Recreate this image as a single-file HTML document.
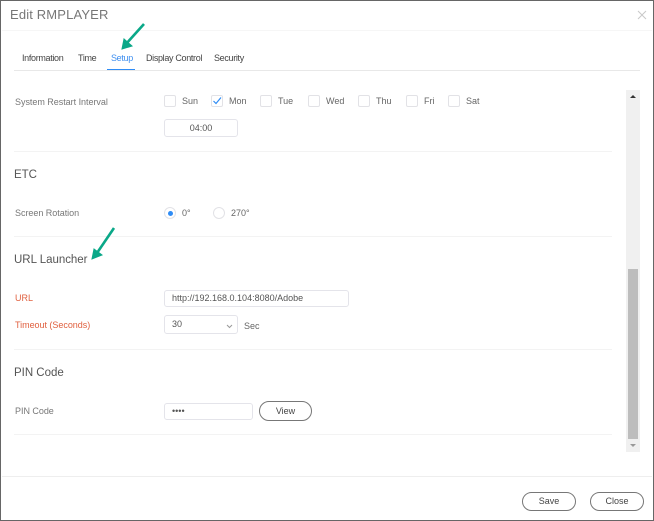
<!DOCTYPE html>
<html><head><meta charset="utf-8">
<style>
html,body{margin:0;padding:0;background:#fff}
#p{position:relative;width:654px;height:521px;overflow:hidden;background:#fff;font-family:"Liberation Sans",sans-serif;color:#555}
#b{position:absolute;left:0;top:0;width:654px;height:521px;filter:blur(.3px)}
#p div{position:absolute;box-sizing:border-box;white-space:nowrap}
.t{font-size:9px;line-height:12px;letter-spacing:-.33px;color:#444}
.l{font-size:9px;line-height:12px;color:#777;letter-spacing:-.03px}
.h{font-size:11.5px;line-height:14px;color:#555;letter-spacing:-.02px}
.d{font-size:9px;line-height:12px;color:#666;letter-spacing:0}
.c{width:12px;height:12px;border:1px solid #e2e2e6;border-radius:2px;background:#fff}
.r{width:12px;height:12px;border:1px solid #e2e2e6;border-radius:50%;background:#fff}
.hr{left:14px;width:598px;height:1px;background:#f3f3f3}
.i{border:1px solid #e4e4ea;border-radius:3px;background:#fff;font-size:9px;color:#555}
.b{border:1px solid #777;border-radius:10px;background:#fff;font-size:9px;color:#444;text-align:center}
</style></head><body>
<div id="p"><div id="b">
<div style="left:0;top:0;width:654px;height:521px;border:1px solid #666"></div>
<div style="left:10px;top:7px;font-size:13px;line-height:16px;color:#777;letter-spacing:.15px">Edit RMPLAYER</div>
<svg style="position:absolute;left:637px;top:10px" width="10" height="10" viewBox="0 0 10 10"><path d="M1 1L9 9M9 1L1 9" stroke="#c8c8c8" stroke-width="1" fill="none"/></svg>
<div style="left:2px;top:30px;width:650px;height:1px;background:#f6f6f6"></div>

<div class="t" style="left:22px;top:52px">Information</div>
<div class="t" style="left:78px;top:52px">Time</div>
<div class="t" style="left:111px;top:52px;color:#3f8ff0">Setup</div>
<div class="t" style="left:146px;top:52px">Display Control</div>
<div class="t" style="left:214px;top:52px">Security</div>
<div style="left:14px;top:70px;width:626px;height:1px;background:#e8e8e8"></div>
<div style="left:107px;top:68.5px;width:28px;height:1.5px;background:#2f8cf5"></div>

<div class="l" style="left:15px;top:96px">System Restart Interval</div>
<div class="c" style="left:164px;top:95px"></div><div class="d" style="left:182px;top:95px">Sun</div>
<div class="c" style="left:211px;top:95px"></div>
<svg style="position:absolute;left:211px;top:95px" width="12" height="12" viewBox="0 0 12 12"><path d="M2.5 6L5 8.5L10 2.5" stroke="#2f8cf5" stroke-width="1.2" fill="none"/></svg>
<div class="d" style="left:229px;top:95px">Mon</div>
<div class="c" style="left:260px;top:95px"></div><div class="d" style="left:278px;top:95px">Tue</div>
<div class="c" style="left:308px;top:95px"></div><div class="d" style="left:326px;top:95px">Wed</div>
<div class="c" style="left:358px;top:95px"></div><div class="d" style="left:376px;top:95px">Thu</div>
<div class="c" style="left:406px;top:95px"></div><div class="d" style="left:424px;top:95px">Fri</div>
<div class="c" style="left:448px;top:95px"></div><div class="d" style="left:466px;top:95px">Sat</div>
<div class="i" style="left:164px;top:119px;width:74px;height:18px;line-height:17px;text-align:center">04:00</div>
<div class="hr" style="top:151px"></div>

<div class="h" style="left:14px;top:168px">ETC</div>
<div class="l" style="left:15px;top:207px">Screen Rotation</div>
<div class="r" style="left:164px;top:207px"></div>
<div style="left:167.5px;top:210.5px;width:5px;height:5px;border-radius:50%;background:#2f8cf5"></div>
<div class="d" style="left:182px;top:207px">0°</div>
<div class="r" style="left:213px;top:207px"></div>
<div class="d" style="left:231px;top:207px">270°</div>
<div class="hr" style="top:236px"></div>

<div class="h" style="left:14px;top:253px">URL Launcher</div>
<div class="l" style="left:15px;top:292px;color:#e0603f">URL</div>
<div class="i" style="left:164px;top:290px;width:185px;height:17px;line-height:15px;padding-left:7px">http://192.168.0.104:8080/Adobe</div>
<div class="l" style="left:15px;top:319px;color:#e0603f">Timeout (Seconds)</div>
<div class="i" style="left:164px;top:315px;width:74px;height:19px;line-height:17px;padding-left:7px">30</div>
<svg style="position:absolute;left:226px;top:324px" width="7" height="5" viewBox="0 0 7 5"><path d="M1 1L3.5 3.5L6 1" stroke="#999" stroke-width="1" fill="none"/></svg>
<div class="d" style="left:244px;top:320px">Sec</div>
<div class="hr" style="top:349px"></div>

<div class="h" style="left:14px;top:366px">PIN Code</div>
<div class="l" style="left:15px;top:405px">PIN Code</div>
<div class="i" style="left:164px;top:403px;width:89px;height:17px;line-height:14px;padding-left:7px">••••</div>
<div class="b" style="left:259px;top:401px;width:53px;height:20px;line-height:18px">View</div>
<div class="hr" style="top:434px"></div>

<div style="left:626px;top:90px;width:14px;height:362px;background:#f0f0f0"></div>
<div style="left:628px;top:269px;width:10px;height:170px;background:#bdbdbd"></div>
<svg style="position:absolute;left:629px;top:94px" width="8" height="5" viewBox="0 0 8 5"><path d="M1 4L4 1L7 4Z" fill="#333"/></svg>
<svg style="position:absolute;left:629px;top:443px" width="8" height="5" viewBox="0 0 8 5"><path d="M1 1L4 4L7 1Z" fill="#999"/></svg>

<div style="left:2px;top:476px;width:650px;height:1px;background:#eeeeee"></div>
<div class="b" style="left:522px;top:492px;width:54px;height:19px;line-height:17px">Save</div>
<div class="b" style="left:590px;top:492px;width:54px;height:19px;line-height:17px">Close</div>

<svg style="position:absolute;left:0;top:0" width="654" height="521" viewBox="0 0 654 521">
<path d="M144 24L126 44" stroke="#0aa888" stroke-width="2.6" fill="none"/>
<path d="M122 49L124 39L132 46Z" fill="#0aa888" stroke="#0aa888" stroke-width="1"/>
<path d="M114 228L97 253" stroke="#0aa888" stroke-width="2.6" fill="none"/>
<path d="M92 259L94 249L102 255Z" fill="#0aa888" stroke="#0aa888" stroke-width="1"/>
</svg>
</div></div>
</body></html>
